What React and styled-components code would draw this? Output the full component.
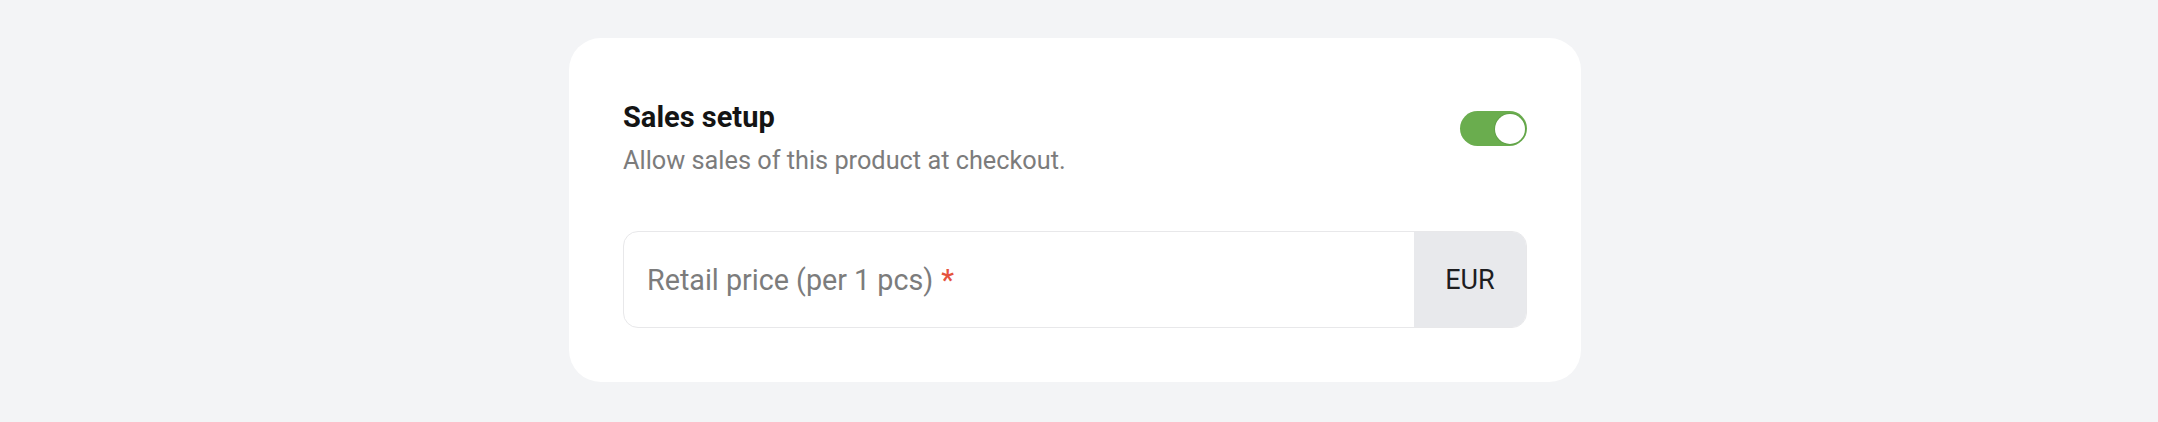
import React, { useState } from 'react';
import styled, { createGlobalStyle } from 'styled-components';

const GlobalStyle = createGlobalStyle`
  html, body { margin: 0; padding: 0; background: #f3f4f6; }
  body { font-family: Roboto, "Liberation Sans", Arial, sans-serif; }
  * { box-sizing: border-box; }
`;

const Page = styled.div`
  display: flex; justify-content: center; align-items: flex-start; padding: 38px 8px 0 0; min-height: 422px;
`;

const Card = styled.section`
  width: 1012px; background: #fff; border-radius: 32px; padding: 59px 54px 54px 54px;
`;

const Header = styled.div`
  display: flex; justify-content: space-between; align-items: flex-start;
`;

const Title = styled.h2`
  margin: 0; font-size: 29px; line-height: 40px; font-weight: 700; color: #141414;
`;

const Subtitle = styled.p`
  margin: 8px 0 0 0; font-size: 25.3px; line-height: 32px; color: #7c7c7c;
`;

const Switch = styled.button`
  position: relative; width: 67px; height: 35px; margin-top: 14px; padding: 0; border: none; border-radius: 18px;
  background: ${p => (p.$on ? '#6aad4e' : '#d4d6da')}; cursor: pointer; flex-shrink: 0;
`;

const Knob = styled.span`
  position: absolute; top: 2.5px; left: ${p => (p.$on ? '34.5px' : '2.5px')}; width: 30px; height: 30px; border-radius: 50%;
  background: #fff; box-shadow: 0 0 0 1px rgba(80, 140, 60, 0.35);
`;

const Field = styled.div`
  display: flex; margin-top: 54px; height: 97px; border: 1px solid #e8e8ea; border-radius: 15px; overflow: hidden;
`;

const Label = styled.label`
  flex: 1; display: flex; align-items: center; padding-left: 23px; font-size: 28.7px; color: #7c7c7c;
`;

const Required = styled.span`
  color: #e5533d; margin-left: 8px; font-weight: 500;
`;

const Addon = styled.div`
  width: 112px; display: flex; align-items: center; justify-content: center; background: #e8e9ec; font-size: 27px; color: #1d1d1f;
`;

const App = () => {
  const [on, setOn] = useState(true);
  return (
    <>
      <GlobalStyle />
      <Page>
        <Card>
          <Header>
            <div>
              <Title>Sales setup</Title>
              <Subtitle>Allow sales of this product at checkout.</Subtitle>
            </div>
            <Switch $on={on} onClick={() => setOn(!on)} aria-label="Sales setup">
              <Knob $on={on} />
            </Switch>
          </Header>
          <Field>
            <Label>Retail price (per 1 pcs)<Required>*</Required></Label>
            <Addon>EUR</Addon>
          </Field>
        </Card>
      </Page>
    </>
  );
};

export default App;
